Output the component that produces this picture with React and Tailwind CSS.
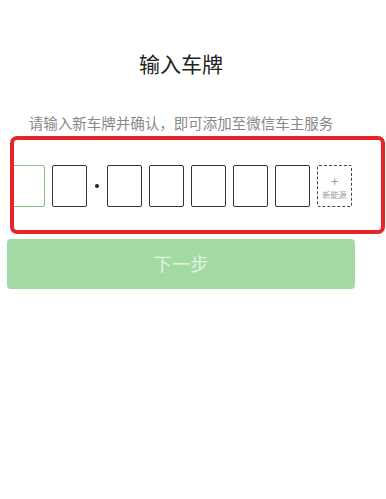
const boxes = [0, 1, 2, 3, 4, 5, 6];

function PlateBox({ active }) {
  return (
    <div
      className={`w-[35px] h-[42px] shrink-0 rounded-[2px] border ${
        active ? "border-[#82c182]" : "border-[#333]"
      }`}
    />
  );
}

export default function App() {
  return (
    <div
      className="relative w-[386px] h-[499px] bg-white overflow-hidden"
      style={{ fontFamily: '"Noto Sans CJK SC", "Noto Sans", sans-serif' }}
    >
      <div className="w-[362px] flex flex-col">
        <h1 className="pt-[49px] text-center text-[21px] leading-[28px] text-[#222] font-normal">
          输入车牌
        </h1>
        <p className="mt-[36px] text-center text-[14.5px] leading-[20px] text-[#888]">
          请输入新车牌并确认，即可添加至微信车主服务
        </p>

        {/* plate input row */}
        <div className="mt-[32px] pl-[10px] flex items-center gap-[7px]">
          <PlateBox active />
          <PlateBox />
          <div className="w-[6px] flex justify-center">
            <div className="w-[4px] h-[4px] rounded-full bg-[#222]" />
          </div>
          {boxes.slice(2).map((i) => (
            <PlateBox key={i} />
          ))}
          <div className="w-[35px] h-[42px] shrink-0 rounded-[2px] border border-dashed border-[#444] flex flex-col items-center justify-center pt-[3px]">
            <span className="block text-[13px] leading-[12px] text-[#999]">+</span>
            <span className="block text-[8px] leading-[10px] text-[#999] mt-[3px]">新能源</span>
          </div>
        </div>

        <button className="mt-[32px] ml-[7px] w-[348px] h-[50px] rounded-[4px] bg-[#a3d9a2] text-[18.5px] text-[#e2f4e1]">
          下一步
        </button>
      </div>

      {/* red annotation frame */}
      <div className="absolute left-[9.5px] top-[136px] w-[375px] h-[98px] border-4 border-[#e52528] rounded-[7px] pointer-events-none" />
    </div>
  );
}
